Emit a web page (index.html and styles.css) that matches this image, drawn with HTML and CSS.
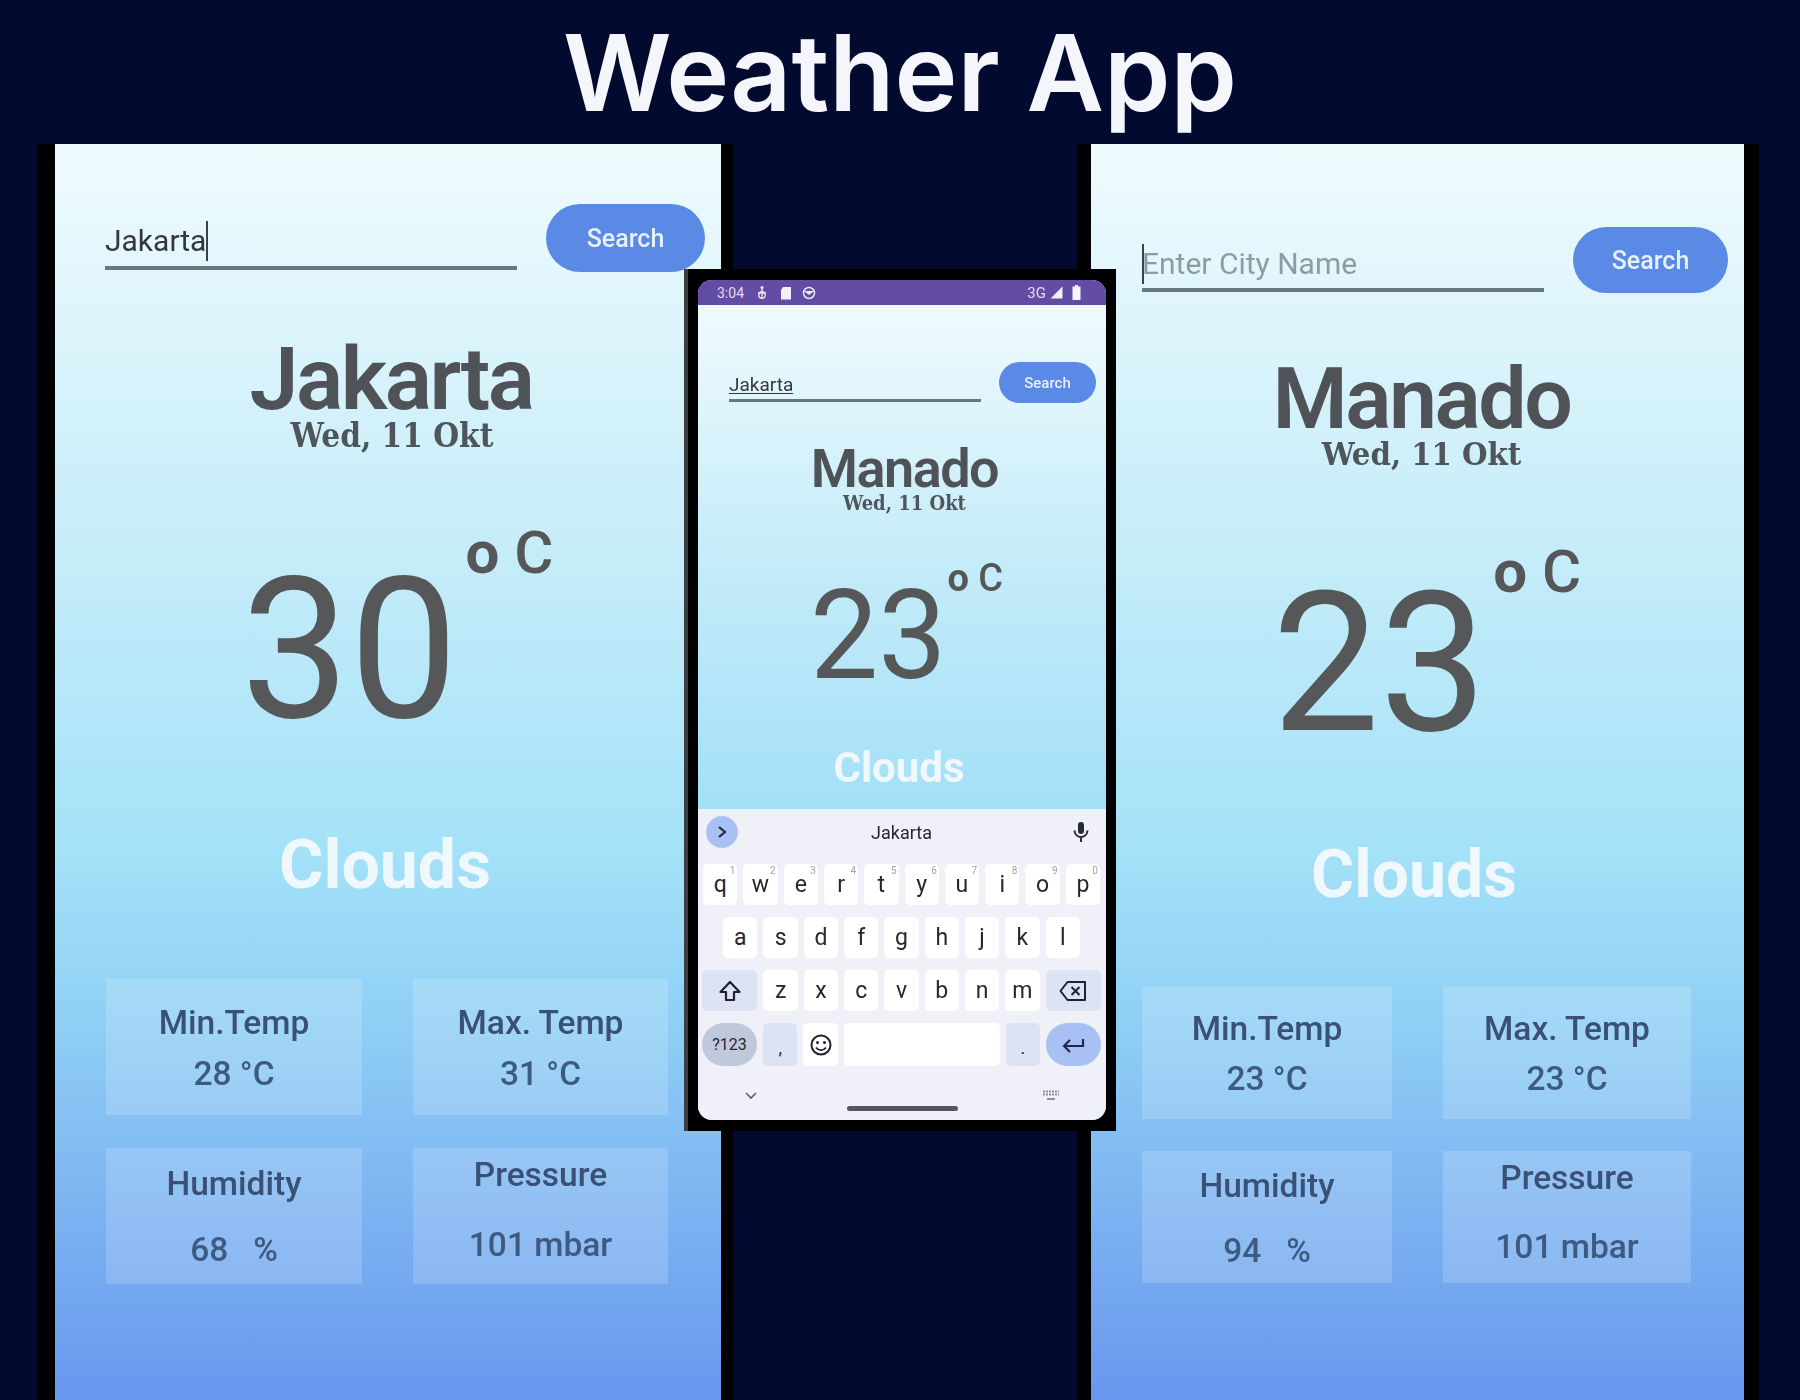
FILE: index.html
```html
<!DOCTYPE html>
<html>
<head>
  <title>Weather App</title>
  <link rel="stylesheet" href="styles.css">
</head>
<body>
  <h1 class="page-title">Weather App</h1>

  <div class="stage">
    <div class="phone phone-left">
      <div class="app app-left">
        <div class="search">
          <div class="field">Jakarta<span class="caret"></span></div>
          <div class="search-btn">Search</div>
        </div>
        <div class="city">Jakarta</div>
        <div class="date">Wed, 11 Okt</div>
        <div class="temp"><span class="temp-num">30</span><span class="temp-unit">o C</span></div>
        <div class="sky">Clouds</div>
        <div class="stats">
          <div class="stat stat-temp"><div class="stat-name">Min.Temp</div><div class="stat-value">28 °C</div></div>
          <div class="stat stat-temp"><div class="stat-name">Max. Temp</div><div class="stat-value">31 °C</div></div>
          <div class="stat stat-hum"><div class="stat-name">Humidity</div><div class="stat-value">68 &nbsp; %</div></div>
          <div class="stat stat-pres"><div class="stat-name">Pressure</div><div class="stat-value">101 mbar</div></div>
        </div>
      </div>
    </div>

    <div class="phone phone-right">
      <div class="app app-right">
        <div class="search">
          <div class="field field-empty"><span class="caret"></span>Enter City Name</div>
          <div class="search-btn">Search</div>
        </div>
        <div class="city">Manado</div>
        <div class="date">Wed, 11 Okt</div>
        <div class="temp"><span class="temp-num">23</span><span class="temp-unit">o C</span></div>
        <div class="sky">Clouds</div>
        <div class="stats">
          <div class="stat stat-temp"><div class="stat-name">Min.Temp</div><div class="stat-value">23 °C</div></div>
          <div class="stat stat-temp"><div class="stat-name">Max. Temp</div><div class="stat-value">23 °C</div></div>
          <div class="stat stat-hum"><div class="stat-name">Humidity</div><div class="stat-value">94 &nbsp; %</div></div>
          <div class="stat stat-pres"><div class="stat-name">Pressure</div><div class="stat-value">101 mbar</div></div>
        </div>
      </div>
    </div>

    <div class="phone-mini">
      <div class="app app-mini">
        <div class="statusbar">
          <span class="clock">3:04</span>
          <svg class="st-icon" width="12" height="16" viewBox="0 0 12 16"><circle cx="6" cy="2.5" r="1.6" fill="#e6e2f2"/><path d="M6 3v11M2 8h8" stroke="#e6e2f2" stroke-width="1.4" fill="none"/><circle cx="6" cy="10" r="3.2" fill="none" stroke="#e6e2f2" stroke-width="1.4"/></svg>
          <svg class="st-icon" width="12" height="14" viewBox="0 0 12 14"><path d="M3 1h8v12.500H1V4z" fill="#f2f0f8"/></svg>
          <svg class="st-icon st-round" width="14" height="14" viewBox="0 0 14 14"><circle cx="7" cy="7" r="5.500" fill="none" stroke="#eeeaf6" stroke-width="1.500"/><path d="M2 5h10L7 9z" fill="#eeeaf6"/></svg>
          <span class="st-right">3G</span>
          <svg class="st-icon" width="13" height="13" viewBox="0 0 13 13"><path d="M12.500 0.500v12H0.500z" fill="#f2f0f8"/></svg>
          <svg class="st-icon st-batt" width="9" height="15" viewBox="0 0 9 15"><path d="M3 0h3v1.500h2.500V15H0.500V1.500H3z" fill="#f6f4fa"/></svg>
        </div>
        <div class="search">
          <div class="field"><span class="composing">Jakarta</span></div>
          <div class="search-btn">Search</div>
        </div>
        <div class="city">Manado</div>
        <div class="date">Wed, 11 Okt</div>
        <div class="temp"><span class="temp-num">23</span><span class="temp-unit">o C</span></div>
        <div class="sky">Clouds</div>

        <div class="keyboard">
          <div class="suggest">
            <span class="sg-toggle">
              <svg width="12" height="14" viewBox="0 0 12 14"><path d="M3 2l6 5-6 5" fill="none" stroke="#1f2a4a" stroke-width="2.200"/></svg>
            </span>
            <span class="sg-word">Jakarta</span>
            <svg class="sg-mic" width="16" height="22" viewBox="0 0 16 22"><rect x="5" y="1" width="6" height="12" rx="3" fill="#2a2c33"/><path d="M1.500 9.500a6.500 6.500 0 0 0 13 0M8 16v5" fill="none" stroke="#2a2c33" stroke-width="2"/></svg>
          </div>
          <div class="keys">
            <div class="key-row">
              <span class="key">q<sup class="hint">1</sup></span>
              <span class="key">w<sup class="hint">2</sup></span>
              <span class="key">e<sup class="hint">3</sup></span>
              <span class="key">r<sup class="hint">4</sup></span>
              <span class="key">t<sup class="hint">5</sup></span>
              <span class="key">y<sup class="hint">6</sup></span>
              <span class="key">u<sup class="hint">7</sup></span>
              <span class="key">i<sup class="hint">8</sup></span>
              <span class="key">o<sup class="hint">9</sup></span>
              <span class="key">p<sup class="hint">0</sup></span>
            </div>
            <div class="key-row">
              <span class="key">a</span><span class="key">s</span><span class="key">d</span><span class="key">f</span><span class="key">g</span><span class="key">h</span><span class="key">j</span><span class="key">k</span><span class="key">l</span>
            </div>
            <div class="key-row">
              <span class="key key-fn key-wide">
                <svg width="24" height="24" viewBox="0 0 24 24"><path d="M12 3L2.500 13H8v8h8v-8h5.500z" fill="none" stroke="#20232b" stroke-width="2.200" stroke-linejoin="round"/></svg>
              </span>
              <span class="key">z</span><span class="key">x</span><span class="key">c</span><span class="key">v</span><span class="key">b</span><span class="key">n</span><span class="key">m</span>
              <span class="key key-fn key-wide">
                <svg width="28" height="22" viewBox="0 0 28 22"><path d="M8.500 2H26v18H8.500L1.500 11z" fill="none" stroke="#20232b" stroke-width="2" stroke-linejoin="round"/><path d="M12.500 7l8 8M20.500 7l-8 8" stroke="#20232b" stroke-width="2"/></svg>
              </span>
            </div>
            <div class="key-row key-row-last">
              <span class="key key-wide key-sym">?123</span>
              <span class="key key-fn key-punct">,</span>
              <span class="key">
                <svg width="24" height="24" viewBox="0 0 24 24"><circle cx="12" cy="12" r="9.500" fill="none" stroke="#20232b" stroke-width="2"/><circle cx="8.500" cy="9.500" r="1.500" fill="#20232b"/><circle cx="15.500" cy="9.500" r="1.500" fill="#20232b"/><path d="M7 14.500c2.500 3.500 7.500 3.500 10 0" fill="none" stroke="#20232b" stroke-width="1.800"/></svg>
              </span>
              <span class="key key-space"></span>
              <span class="key key-fn key-punct">.</span>
              <span class="key key-wide key-enter">
                <svg width="24" height="18" viewBox="0 0 24 18"><path d="M22 3v7H4M9 4L3 10l6 6" fill="none" stroke="#1f2a4a" stroke-width="2.200"/></svg>
              </span>
            </div>
          </div>
          <div class="kb-nav">
            <svg width="14" height="10" viewBox="0 0 14 10"><path d="M2 2l5 5 5-5" fill="none" stroke="#5c5e66" stroke-width="1.600"/></svg>
            <svg width="18" height="12" viewBox="0 0 18 12"><path d="M1 1.500h16M1 4.500h16" stroke="#8d8f98" stroke-width="2" stroke-dasharray="2 1"/><path d="M5 9h8" stroke="#8d8f98" stroke-width="2"/></svg>
          </div>
          <div class="home-bar"></div>
        </div>
      </div>
    </div>
  </div>
</body>
</html>
```

FILE: styles.css
```css
html, body {
  margin: 0;
  height: 1400px;
  overflow: hidden;
  background-color: #030a2f;
}

.page-title {
  margin: 0;
  height: 144px;
  text-align: center;
  font-family: "Inter", sans-serif;
  font-weight: 600;
  font-size: 106.500px;
  line-height: 146px;
  color: #f4f6fc;
}

.stage {
  position: relative;
  display: flex;
  justify-content: space-between;
  padding: 0 41px 0 37px;
  height: 1256px;
}

.phone {
  background-color: #000;
  height: 100%;
}

.phone-left {
  padding: 0 12px 0 18px;
}

.phone-right {
  padding: 0 15px 0 14px;
}

/* the middle phone sits on top of the other two */
.phone-mini {
  position: absolute;
  left: 684px;
  top: 125px;
  box-sizing: border-box;
  width: 432px;
  height: 862px;
  padding: 11px 10px 11px 10px;
  border-left: 4px solid #3c3e42;
  background-color: #000;
}

.app {
  box-sizing: border-box;
  height: 100%;
  display: flex;
  flex-direction: column;
  font-family: "Roboto", sans-serif;
  background: linear-gradient(#effbfd 0%, #c5ecf9 33%, #a4e2f8 56%, #8fcff5 70%, #6897ee 100%);
  filter: blur(0.6px);
}

.app-left { width: 666px; }
.app-right { width: 653px; }

.app-mini {
  width: 408px;
  border-radius: 14px;
  overflow: hidden;
  background: linear-gradient(#f4fcfe 0%, #c9edf9 30%, #a4e0f8 62%, #8dcff5 100%);
}

/* search row */
.search {
  display: flex;
  padding-left: 50px;
}

.field {
  box-sizing: border-box;
  display: flex;
  align-items: center;
  color: #34383d;
  font-size: 30px;
  border-bottom: 4px solid #68777f;
}

.field-empty {
  color: #8c9ca5;
}

.field-empty .caret {
  margin-right: -2px;
}

.caret {
  width: 2px;
  height: 40px;
  background-color: #3c4247;
}

.search-btn {
  display: flex;
  align-items: center;
  justify-content: center;
  border-radius: 40px;
  background-color: #5a8ae6;
  color: #e8f0fb;
  font-weight: 500;
  font-size: 25px;
}

.app-left .search { padding-top: 60px; }
.app-left .field { width: 412px; height: 50px; margin-top: 16px; padding-bottom: 5px; }
.app-left .search-btn { width: 159px; height: 68px; margin-left: 29px; }

.app-right .search { padding: 83px 0 0 51px; }
.app-right .field { width: 402px; height: 50px; margin-top: 15px; padding-bottom: 3px; }
.app-right .search-btn { width: 155px; height: 66px; margin-left: 29px; }

.app-mini .search { padding: 57px 0 0 31px; }
.app-mini .field { width: 252px; height: 30px; margin-top: 10px; padding-bottom: 3px; font-size: 19px; border-bottom-width: 3px; }
.app-mini .search-btn { width: 97px; height: 41px; margin-left: 18px; font-size: 15px; }

.composing {
  text-decoration: underline;
  text-underline-offset: 2px;
}

/* city and date */
.city {
  padding-left: 6px;
  text-align: center;
  font-weight: 600;
  line-height: 1;
  color: #4f5358;
}

.date {
  padding-left: 8px;
  text-align: center;
  font-family: "DejaVu Serif", serif;
  font-stretch: condensed;
  font-weight: 700;
  line-height: 1;
  color: #4e555b;
}

.app-left .city { margin-top: 63px; font-size: 88px; letter-spacing: -2.500px; }
.app-left .date { margin-top: -4px; font-size: 33px; }
.app-right .city { margin-top: 63px; padding-left: 8px; font-size: 86px; letter-spacing: -2.500px; }
.app-right .date { margin-top: -4px; font-size: 32.500px; }
.app-mini .city { margin-top: 39px; padding-left: 5px; font-size: 54px; letter-spacing: -1.500px; }
.app-mini .date { margin-top: -3px; padding-left: 5px; font-size: 20px; }

/* temperature */
.temp {
  display: flex;
  align-items: flex-start;
  color: #555759;
  line-height: 1;
  font-weight: 450;
}

.temp-num {
  transform: scaleX(0.98);
  transform-origin: left;
}

.temp-unit {
  white-space: nowrap;
  font-weight: 500;
}

.temp-unit::first-letter {
  font-weight: 700;
}

.app-left .temp { margin-top: 99px; padding-left: 186px; font-size: 197px; }
.app-left .temp-num { margin-right: -5px; }
.app-left .temp-unit { margin: -28px 0 0 8px; font-size: 60px; }

.app-right .temp { margin-top: 95px; padding-left: 181px; font-size: 195px; }
.app-right .temp-num { margin-right: -5px; }
.app-right .temp-unit { margin: -24px 0 0 7px; font-size: 60px; }

.app-mini .temp { margin-top: 61px; padding-left: 112px; font-size: 124px; }
.app-mini .temp-num { margin-right: -4px; }
.app-mini .temp-unit { margin: -15px 0 0 2px; font-size: 38px; }

.sky {
  padding-right: 6px;
  text-align: center;
  font-weight: 700;
  line-height: 1;
  color: #eff8fd;
}

.app-left .sky { margin-top: 83px; font-size: 68px; }
.app-right .sky { margin-top: 81px; padding-right: 7px; font-size: 66px; }
.app-mini .sky { margin-top: 49px; font-size: 42px; }

/* info cards */
.stats {
  display: grid;
  padding-left: 51px;
  grid-template-columns: 256px 255px;
  grid-auto-rows: 136px;
  column-gap: 51px;
  row-gap: 33px;
}

.app-left .stats { margin-top: 80px; }

.app-right .stats {
  margin-top: 79px;
  grid-template-columns: 250px 248px;
  grid-auto-rows: 132px;
  row-gap: 32px;
}

.stat {
  background-color: rgba(255, 255, 255, 0.17);
  text-align: center;
  color: #3a5074;
  font-size: 33.500px;
  font-weight: 500;
  line-height: 1;
}

.stat-temp { padding-top: 27px; }
.stat-temp .stat-value { margin-top: 17px; }
.stat-hum { padding-top: 19px; }
.stat-hum .stat-value { margin-top: 32px; }
.stat-pres { padding-top: 10px; }
.stat-pres .stat-value { margin-top: 36px; }

.app-right .stat-temp { padding-top: 25px; }
.app-right .stat-hum { padding-top: 18px; }

.stat-value {
  color: #3f5a80;
}

/* status bar of the middle phone */
.statusbar {
  display: flex;
  align-items: center;
  gap: 12px;
  flex: none;
  height: 25px;
  padding: 0 25px 0 19px;
  background-color: #634ca4;
  color: #e2def0;
  font-size: 14px;
}

.st-round {
  margin-left: -2px;
}

.st-right {
  margin-left: auto;
  margin-right: -8px;
  font-size: 15px;
}

.st-batt {
  margin-left: -3px;
}

.st-icon {
  flex: none;
}

/* on-screen keyboard */
.keyboard {
  margin-top: auto;
  height: 311px;
  flex: none;
  background-color: #f0f0f8;
  color: #26282e;
}

.suggest {
  display: flex;
  align-items: center;
  justify-content: space-between;
  height: 46px;
  padding: 0 17px 9px 8px;
}

.sg-toggle {
  display: flex;
  align-items: center;
  justify-content: center;
  width: 32px;
  height: 32px;
  border-radius: 50%;
  background-color: #a9c0f5;
}

.sg-word {
  font-size: 18px;
  margin-left: -8px;
}

.keys {
  display: flex;
  flex-direction: column;
  gap: 12px;
  padding: 0 6px 0 5px;
}

.key-row {
  display: flex;
  justify-content: center;
  gap: 6px;
  height: 41px;
}

.key-row-last {
  height: 43px;
}

.key {
  position: relative;
  display: flex;
  align-items: center;
  justify-content: center;
  flex: 0 0 34.300px;
  border-radius: 5px;
  background-color: #fff;
  font-size: 23px;
}

.key-fn {
  background-color: #dce3f5;
}

.key-wide {
  flex-basis: 55px;
}

.key-sym {
  border-radius: 22px;
  background-color: #c0c8dc;
  font-size: 16px;
}

.key-enter {
  border-radius: 22px;
  background-color: #a9c0f5;
}

.key-punct {
  font-size: 18px;
  padding-top: 6px;
  box-sizing: border-box;
}

.key-space {
  flex: 0 0 156px;
}

.hint {
  position: absolute;
  top: 2px;
  right: 2px;
  font-size: 10px;
  line-height: 1;
  color: #a0a2aa;
}

.kb-nav {
  display: flex;
  align-items: center;
  justify-content: space-between;
  margin-top: 24px;
  padding: 0 46px;
}

.home-bar {
  width: 111px;
  height: 5px;
  margin: 4px auto 0;
  border-radius: 3px;
  background-color: #55565c;
}
```
